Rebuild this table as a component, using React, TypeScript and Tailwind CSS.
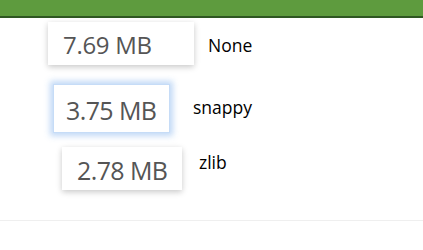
export default function App() {
  const font = { fontFamily: '"Open Sans", "Noto Sans", sans-serif' };
  return (
    <div className="w-[423px] h-[250px] bg-white overflow-hidden" style={font}>
      {/* header strip */}
      <div className="h-[18px] bg-[#5e9b3e] border-b-2 border-[#2f5722]" />

      {/* None */}
      <div className="flex items-center mt-[4px]">
        <div className="ml-[48px] w-[146px] h-[43px] bg-white shadow-[0_2px_6px_rgba(0,0,0,0.22)] flex items-center pl-[15px] pt-[2px]">
          <span className="text-[24px] leading-none text-[#555] tracking-[-0.3px]">7.69 MB</span>
        </div>
        <span className="ml-[14px] mt-[4px] text-[17.5px] leading-none text-black">None</span>
      </div>

      {/* snappy */}
      <div className="flex items-center mt-[19px]">
        <div className="ml-[53px] w-[117px] h-[49px] bg-white border border-[#c6dcf7] shadow-[0_0_6px_3px_rgba(120,170,235,0.45)] flex items-center pl-[12px] pt-[3px]">
          <span className="text-[25px] leading-none text-[#555] tracking-[-0.6px]">3.75 MB</span>
        </div>
        <span className="ml-[23px] mb-[2px] text-[17.5px] leading-none text-black">snappy</span>
      </div>

      {/* zlib */}
      <div className="flex items-center mt-[14px]">
        <div className="ml-[62px] w-[120px] h-[43px] bg-white shadow-[0_2px_6px_rgba(0,0,0,0.22)] flex items-center pl-[15px] pt-[4px]">
          <span className="text-[25px] leading-none text-[#555] tracking-[-0.6px]">2.78 MB</span>
        </div>
        <span className="ml-[17px] mb-[12px] text-[17.5px] leading-none text-black">zlib</span>
      </div>

      {/* divider */}
      <div className="mt-[30px] h-px bg-[#efefef]" />
    </div>
  );
}
